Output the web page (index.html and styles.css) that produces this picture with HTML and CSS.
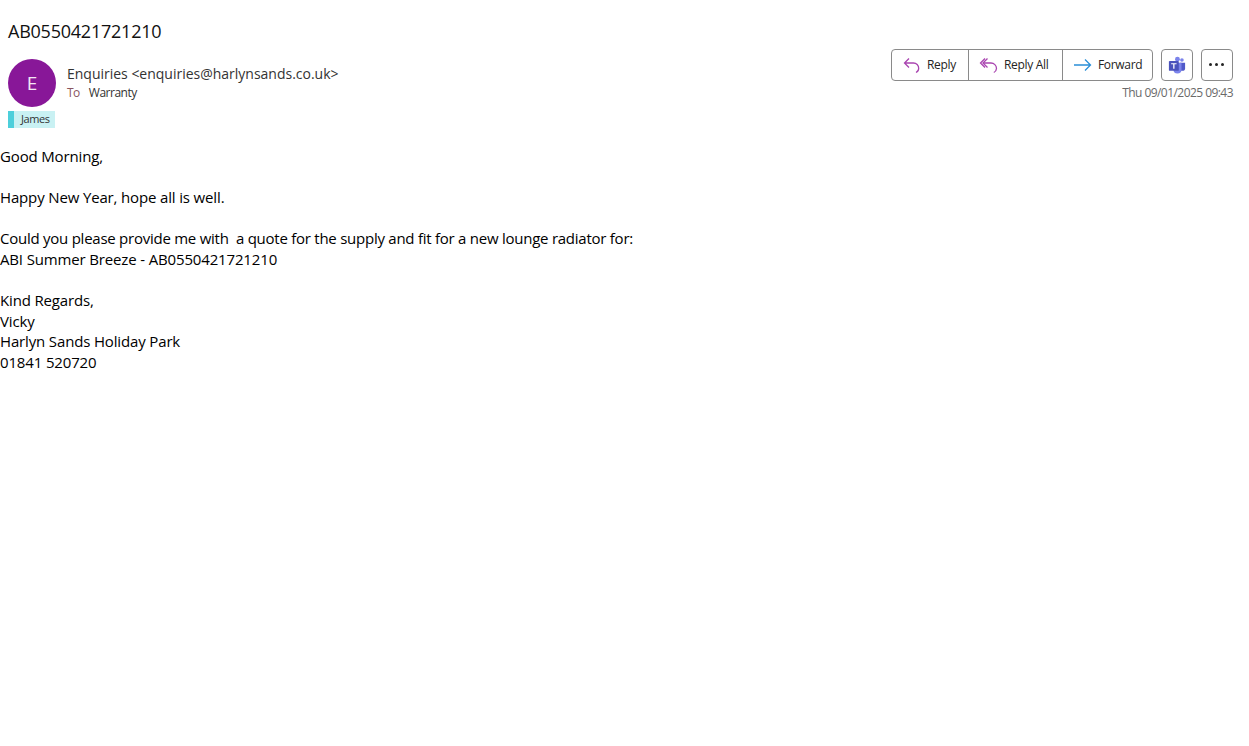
FILE: index.html
```html
<!DOCTYPE html>
<html lang="en">
<head>
<meta charset="utf-8">
<title>AB0550421721210</title>
<link rel="stylesheet" href="styles.css">
</head>
<body>
<header class="header">
  <h1 class="subject">AB0550421721210</h1>
  <div class="meta">
    <div class="sender">
      <div class="avatar">E</div>
      <div class="addresses">
        <div class="from">Enquiries &lt;enquiries@harlynsands.co.uk&gt;</div>
        <div class="to"><span class="to-label">To</span><span class="to-name">Warranty</span></div>
      </div>
    </div>
    <div class="actions">
      <div class="toolbar">
        <div class="group">
          <button class="btn btn-reply">
            <svg class="icon" viewBox="0 0 20 20" fill="none" stroke="#a945b0" stroke-width="1.3"><path d="M7 3.500 2.500 8 7 12.500M2.500 8h9a5.200 5.200 0 0 1 5.200 5.200 4.800 4.800 0 0 1-2.700 4.300"/></svg>
            <span>Reply</span>
          </button>
          <button class="btn btn-all">
            <svg class="icon" viewBox="0 0 20 20" fill="none" stroke="#a945b0" stroke-width="1.3"><path d="M8.500 3.500 4 8 8.500 12.500"/><path d="M6 3.500 1.500 8 6 12.500"/><path d="M4 8h8a5.500 5.500 0 0 1 5.500 5.500 4.800 4.800 0 0 1-2.700 4"/></svg>
            <span>Reply All</span>
          </button>
          <button class="btn btn-forward">
            <svg class="icon" viewBox="0 0 20 20" fill="none" stroke="#2a8fd8" stroke-width="1.3"><path d="M1 10h16M12 4.500 17.500 10 12 15.500"/></svg>
            <span>Forward</span>
          </button>
        </div>
        <button class="btn-square">
          <svg class="teams" viewBox="0 0 20 20">
            <circle cx="15.500" cy="4.500" r="2" fill="#7b83eb"/>
            <circle cx="10.500" cy="3.500" r="2.700" fill="#7b83eb"/>
            <path d="M13 7.500h6v6a3 3 0 0 1-6 0z" fill="#5059c9"/>
            <path d="M6 7.500h9v7.500a4.500 4.500 0 0 1-9 0z" fill="#7b83eb"/>
            <rect x="1" y="5.500" width="11" height="11" rx="1" fill="#4b53bc"/>
            <path d="M3.500 8h6v1.300H7.200v5H5.800v-5H3.500z" fill="#fff"/>
          </svg>
        </button>
        <button class="btn-square btn-more">
          <span class="dots"><i></i><i></i><i></i></span>
        </button>
      </div>
      <div class="date">Thu 09/01/2025 09:43</div>
    </div>
  </div>
  <div class="tag"><span class="tag-bar"></span><span class="tag-name">James</span></div>
</header>
<main class="message">
  <p>Good Morning,</p>
  <p>&nbsp;</p>
  <p>Happy New Year, hope all is well.</p>
  <p>&nbsp;</p>
  <p class="long">Could you please provide me with&nbsp; a quote for the supply and fit for a new lounge radiator for:</p>
  <p>ABI Summer Breeze - AB0550421721210</p>
  <p>&nbsp;</p>
  <p>Kind Regards,</p>
  <p>Vicky</p>
  <p>Harlyn Sands Holiday Park</p>
  <p>01841 520720</p>
</main>
</body>
</html>
```
FILE: styles.css
```css
* { box-sizing: border-box; }
html, body { margin: 0; padding: 0; background: #fff; }
body {
  font-family: "Open Sans", "Noto Sans", "Liberation Sans", sans-serif;
  color: #000;
  height: 746px;
  overflow: hidden;
}
.header { padding: 19px 16px 0 8px; }
.subject {
  margin: 0;
  font-size: 18px;
  line-height: 25px;
  font-weight: 400;
  color: #111;
  letter-spacing: -0.23px;
}
.meta {
  display: flex;
  justify-content: space-between;
  align-items: flex-start;
  margin-top: 5px;
}
.sender { display: flex; margin-top: 10px; }
.avatar {
  width: 48px;
  height: 48px;
  border-radius: 50%;
  background: #881798;
  color: #f3e6f5;
  font-size: 19px;
  line-height: 48px;
  text-align: center;
}
.addresses { margin-left: 11px; padding-top: 5px; }
.from {
  font-size: 14px;
  line-height: 20px;
  color: #333;
  letter-spacing: -0.01px;
}
.to {
  font-size: 12px;
  line-height: 17px;
  letter-spacing: -0.5px;
  color: #333;
}
.to-label { color: #8a5560; margin-right: 9px; }
.actions { display: flex; flex-direction: column; align-items: flex-end; }
.toolbar { display: flex; gap: 8px; }
.group {
  display: flex;
  height: 32px;
  border: 1px solid #8a8a8a;
  border-radius: 4px;
}
.btn {
  display: flex;
  align-items: center;
  height: 30px;
  padding: 0 0 1px;
  border: 0;
  background: none;
  font: inherit;
  font-size: 12px;
  letter-spacing: -0.32px;
  color: #242424;
}
.btn-reply { width: 76px; padding-left: 10px; }
.btn-all { width: 94px; padding-left: 10px; border-left: 1px solid #8a8a8a; }
.btn-forward { width: 90px; padding-left: 10px; border-left: 1px solid #8a8a8a; }
.icon { width: 20px; height: 20px; margin-right: 5px; flex: none; }
.btn-square {
  display: flex;
  align-items: center;
  justify-content: center;
  width: 32px;
  height: 32px;
  padding: 0;
  background: none;
  border: 1px solid #8a8a8a;
  border-radius: 4px;
}
.btn-more { padding-right: 2px; padding-bottom: 1px; }
.teams { width: 18px; height: 18px; }
.dots { display: flex; gap: 3px; }
.dots i { width: 3px; height: 3px; border-radius: 50%; background: #242424; }
.date {
  margin-top: 4px;
  font-size: 12px;
  line-height: 16px;
  letter-spacing: -0.55px;
  color: #6a6a6a;
}
.tag {
  display: flex;
  width: 47px;
  height: 17px;
  margin-top: 4px;
  background: #c9f1f3;
}
.tag-bar { width: 6px; background: #4dcfdb; }
.tag-name {
  margin-left: 7px;
  font-size: 11px;
  line-height: 15px;
  letter-spacing: -0.4px;
  color: #333;
}
.message { margin-top: 18px; }
.message p {
  margin: 0;
  font-size: 15px;
  line-height: 20.600px;
  letter-spacing: -0.15px;
  white-space: nowrap;
}
.message .long { letter-spacing: -0.25px; }
```
